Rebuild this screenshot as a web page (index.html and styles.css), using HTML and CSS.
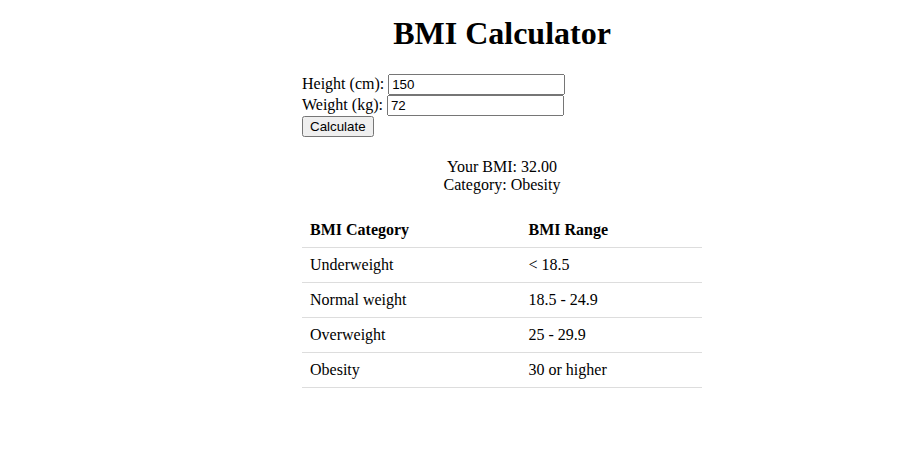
FILE: index.html
```html
<!DOCTYPE html>
<html>
<head>
<meta charset="utf-8">
<title>BMI Calculator</title>
<link rel="stylesheet" href="styles.css">
</head>
<body>
<div class="container">
  <h1 class="title">BMI Calculator</h1>
  <form class="form">
    <label for="height">Height (cm):</label>
    <input type="text" id="height" value="150"><br>
    <label for="weight">Weight (kg):</label>
    <input type="text" id="weight" value="72"><br>
    <button type="button">Calculate</button>
  </form>
  <div class="result">
    <div>Your BMI: 32.00</div>
    <div>Category: Obesity</div>
  </div>
  <table class="bmi-table">
    <thead>
      <tr><th>BMI Category</th><th>BMI Range</th></tr>
    </thead>
    <tbody>
      <tr><td>Underweight</td><td>&lt; 18.5</td></tr>
      <tr><td>Normal weight</td><td>18.5 - 24.9</td></tr>
      <tr><td>Overweight</td><td>25 - 29.9</td></tr>
      <tr><td>Obesity</td><td>30 or higher</td></tr>
    </tbody>
  </table>
</div>
</body>
</html>
```
FILE: styles.css
```css
body {
  margin: 0;
  padding-left: 103px;
  font-family: "Liberation Serif", "Times New Roman", serif;
  font-size: 16px;
  color: #000;
  background: #fff;
}
.container {
  width: 400px;
  margin: 0 auto;
}
.title {
  text-align: center;
  font-size: 32px;
  margin: 15px 0 22px;
}
.form {
  margin: 0;
}
.form input {
  font-family: Arial, "Liberation Sans", sans-serif;
  width: 177px;
  box-sizing: border-box;
}
.form button {
  font-family: Arial, "Liberation Sans", sans-serif;
}
.result {
  margin-top: 21px;
  text-align: center;
}
.bmi-table {
  width: 100%;
  margin-top: 19px;
  border-collapse: collapse;
}
.bmi-table th,
.bmi-table td {
  text-align: left;
  padding: 8px;
  border-bottom: 1px solid #ddd;
}
```
